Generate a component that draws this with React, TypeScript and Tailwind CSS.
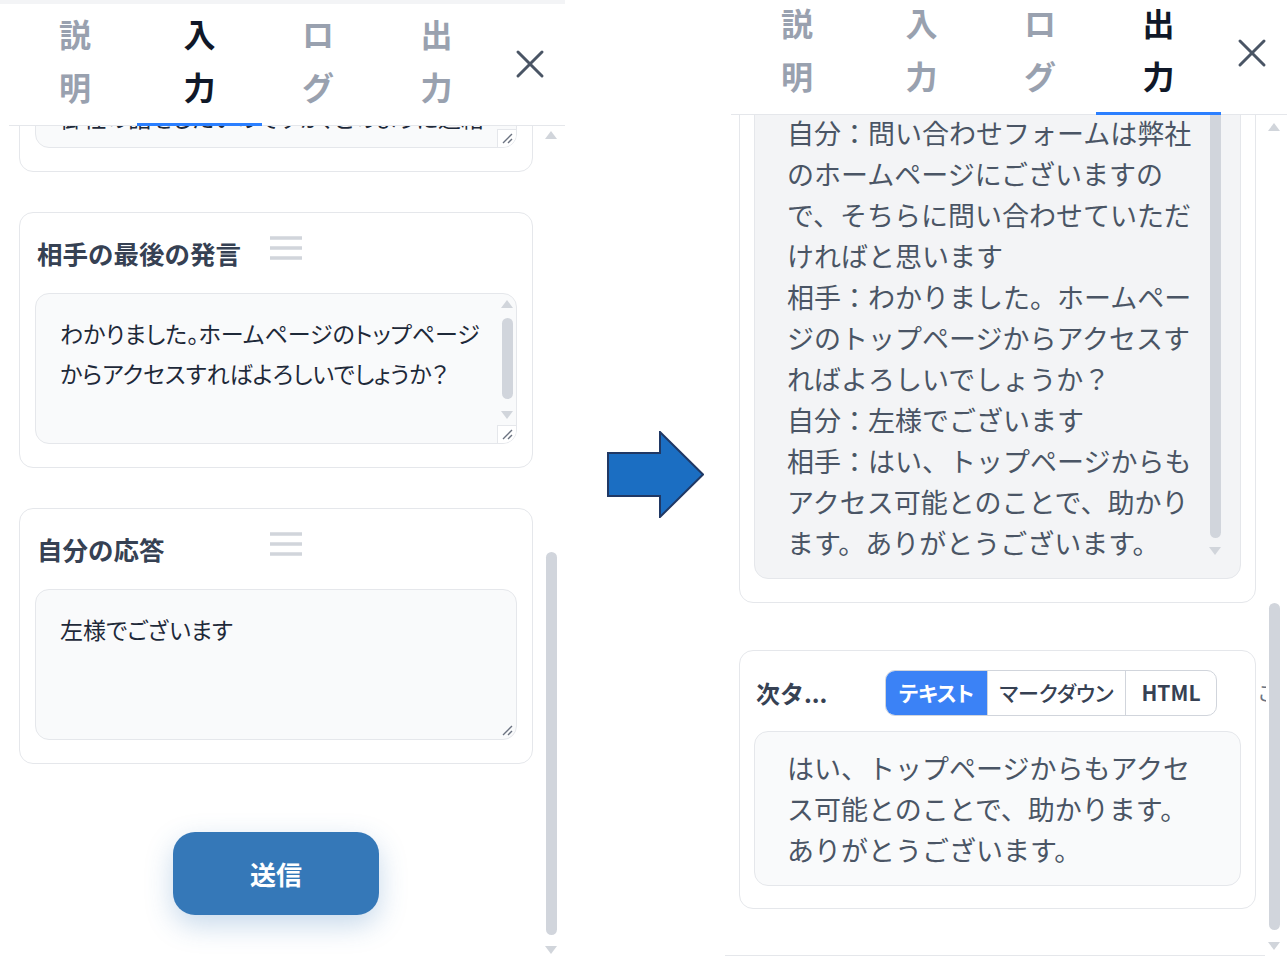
import { X } from 'lucide-react';

const font = "font-['Noto_Sans_CJK_JP','Noto_Sans',sans-serif]";

const TABS = [
  { chars: ['説', '明'], w: 'w-[124px]' },
  { chars: ['入', '力'], w: 'w-[125px]' },
  { chars: ['ロ', 'グ'], w: 'w-[112px]' },
  { chars: ['出', '力'], w: 'w-[125px]' },
];

function TabBar({ active }: { active: number }) {
  return (
    <div className="ml-[9px] flex h-[115px] shrink-0 border-b border-gray-200 pl-[4px]">
      {TABS.map((t, i) => (
        <div
          key={i}
          className={`relative flex h-full ${t.w} flex-col items-center text-[32px] font-bold leading-[53px] ${
            i === active ? 'text-gray-900' : 'text-gray-400'
          }`}
        >
          <div className="-mt-[4px] flex flex-col items-center">
            {t.chars.map((c) => (
              <span key={c}>{c}</span>
            ))}
          </div>
          {i === active && <div className="absolute bottom-[-1px] left-0 right-0 h-[3px] bg-blue-500" />}
        </div>
      ))}
      <div className="ml-[7px] mt-[29px] text-gray-600">
        <X size={48} strokeWidth={1.5} />
      </div>
    </div>
  );
}

function Tri({ down }: { down?: boolean }) {
  return (
    <svg width="12" height="8" viewBox="0 0 12 8" className="block">
      <polygon points={down ? '0,0 12,0 6,8' : '6,0 12,8 0,8'} fill="#d1d5db" />
    </svg>
  );
}

function Scrollbar({ top, thumb, gap }: { top: string; thumb: string; gap: string }) {
  return (
    <div className="flex w-[12px] shrink-0 flex-col items-center">
      <div className={top}>
        <Tri />
      </div>
      <div className={`w-[11px] rounded-full bg-gray-300 ${thumb}`} />
      <div className={gap}>
        <Tri down />
      </div>
    </div>
  );
}

function Handle() {
  return (
    <svg width="32" height="24" viewBox="0 0 32 24" className="absolute left-[250px] top-[23px]">
      <path d="M0 2h32M0 12h32M0 22h32" stroke="#d1d5db" strokeWidth="3.5" />
    </svg>
  );
}

function Grip() {
  return (
    <svg width="12" height="12" viewBox="0 0 12 12" className="block">
      <path d="M2 11 11 2M7 11 11 7" stroke="#6b7280" strokeWidth="1.4" />
    </svg>
  );
}

function Corner() {
  return (
    <div className="absolute bottom-0 right-0 flex h-[18px] w-[19px] items-center justify-center border-l border-t border-gray-200 bg-white">
      <Grip />
    </div>
  );
}

function InputCard({
  title,
  lines,
  className = '',
  scroll,
  corner,
}: {
  title: string;
  lines: string[];
  className?: string;
  scroll?: boolean;
  corner?: boolean;
}) {
  return (
    <div className={`relative shrink-0 rounded-[14px] border border-gray-200 bg-white px-[15px] pb-[23px] ${className}`}>
      <div className="h-[80px] pl-[2px] pt-[24px] text-[25.5px] font-bold leading-[32px] text-gray-700">{title}</div>
      <Handle />
      <div className="relative h-[151px] overflow-hidden rounded-[14px] border border-gray-200 bg-[#f9fafb] pl-[24px] pt-[19px] text-[23px] leading-[40px] text-gray-800 [font-feature-settings:'palt']">
        {lines.map((l) => (
          <div key={l} className="whitespace-nowrap">
            {l}
          </div>
        ))}
        {scroll && (
          <div className="absolute right-[3px] top-[6px] flex flex-col items-center">
            <Tri />
            <div className="mt-[10px] h-[81px] w-[11px] rounded-full bg-gray-300" />
            <div className="mt-[12px]">
              <Tri down />
            </div>
          </div>
        )}
        {corner ? (
          <Corner />
        ) : (
          <div className="absolute bottom-[3px] right-[3px]">
            <Grip />
          </div>
        )}
      </div>
    </div>
  );
}

function LeftPanel() {
  return (
    <div className="flex w-[565px] shrink-0 flex-col">
      <div className="h-[4px] bg-gray-100" />
      <div className="h-[7px]" />
      <TabBar active={1} />
      <div className="flex h-[840px] overflow-hidden">
        <div className="ml-[19px] flex w-[514px] flex-col">
          <InputCard
            className="mt-[-210px]"
            title="相手の発言履歴"
            lines={[
              'お世話になっております。',
              '御社の製品について伺いたいのですが、',
              '御社の話をしたいのですが、どのように連絡',
              'をとればよろしいでしょうか？',
            ]}
            corner
          />
          <InputCard
            className="mt-[40px]"
            title="相手の最後の発言"
            lines={['わかりました。ホームページのトップページ', 'からアクセスすればよろしいでしょうか？']}
            scroll
            corner
          />
          <InputCard className="mt-[40px]" title="自分の応答" lines={['左様でございます']} />
          <button className="mt-[68px] h-[83px] w-[206px] self-center rounded-[22px] bg-[#3578b8] text-[26px] font-bold text-white shadow-[0_10px_28px_rgba(53,120,184,0.28)]">
            送信
          </button>
        </div>
        <div className="ml-[12px]">
          <Scrollbar top="mt-[5px]" thumb="mt-[413px] h-[383px]" gap="mt-[11px]" />
        </div>
      </div>
    </div>
  );
}

const HISTORY = [
  '相手：お世話になっております。',
  '自分：お世話になっております。',
  '相手：問い合わせをしたいのですが',
  '、どのようにすればよいですか？',
  '自分：問い合わせフォームは弊社',
  'のホームページにございますの',
  'で、そちらに問い合わせていただ',
  'ければと思います',
  '相手：わかりました。ホームペー',
  'ジのトップページからアクセスす',
  'ればよろしいでしょうか？',
  '自分：左様でございます',
  '相手：はい、トップページからも',
  'アクセス可能とのことで、助かり',
  'ます。ありがとうございます。',
];

function RightPanel() {
  return (
    <div className="flex w-[565px] shrink-0 flex-col">
      <TabBar active={3} />
      <div className="flex h-[840px] overflow-hidden">
        <div className="ml-[17px] flex w-[517px] flex-col">
          <div className="relative mt-[-117px] shrink-0 rounded-[14px] border border-gray-200 bg-white px-[14px] pb-[23px]">
            <div className="h-[80px] pl-[2px] pt-[24px] text-[25.5px] font-bold leading-[32px] text-gray-700">会話ログ</div>
            <div className="relative flex h-[500px] flex-col justify-end overflow-hidden rounded-[14px] border border-gray-200 bg-[#f3f4f6] pb-[15px] pl-[32px] text-[27px] leading-[41px] text-gray-600">
              {HISTORY.map((l) => (
                <div key={l} className="whitespace-nowrap">
                  {l}
                </div>
              ))}
              <div className="absolute bottom-[23px] right-[19px] flex flex-col items-center">
                <div className="h-[440px] w-[11px] rounded-full bg-gray-300" />
                <div className="mt-[9px]">
                  <Tri down />
                </div>
              </div>
            </div>
          </div>
          <div className="relative mt-[47px] shrink-0 rounded-[14px] border border-gray-200 bg-white px-[14px] pb-[22px]">
            <div className="flex h-[80px] items-center pt-[3px]">
              <div className="w-[131px] pl-[2px] text-[24px] font-bold text-gray-700">次タ...</div>
              <div className="flex h-[46px] overflow-hidden rounded-[10px] border border-gray-300 text-[21px] [font-feature-settings:'palt']">
                <div className="flex w-[101px] items-center justify-center bg-[#3b82f6] font-bold text-white">テキスト</div>
                <div className="flex w-[138px] items-center justify-center border-l border-gray-300 font-medium text-gray-700">
                  マークダウン
                </div>
                <div className="flex w-[91px] items-center justify-center border-l border-gray-300 font-semibold text-gray-700">
                  HTML
                </div>
              </div>
            </div>
            <div className="h-[155px] rounded-[14px] border border-gray-200 bg-[#f9fafb] pl-[32px] pt-[15px] text-[27px] leading-[41px] text-gray-600">
              <div className="whitespace-nowrap">はい、トップページからもアクセ</div>
              <div className="whitespace-nowrap">ス可能とのことで、助かります。</div>
              <div className="whitespace-nowrap">ありがとうございます。</div>
            </div>
            <div className="absolute left-[517px] top-[30px] w-[9px] overflow-hidden text-[20px] leading-[24px] text-gray-500">
              こ
            </div>
          </div>
        </div>
        <div className="ml-[12px]">
          <Scrollbar top="mt-[8px]" thumb="mt-[472px] h-[327px]" gap="mt-[12px]" />
        </div>
      </div>
      <div className="ml-[3px] h-px w-[540px] bg-gray-200" />
    </div>
  );
}

function Arrow() {
  return (
    <div className="flex w-[157px] shrink-0 items-center justify-center pb-[11px] pl-[24px]">
      <svg width="97" height="87" viewBox="0 0 97 87">
        <polygon points="1,22 53,22 53,1 96,43.5 53,86 53,65 1,65" fill="#1b6ec2" stroke="#203864" strokeWidth="2" />
      </svg>
    </div>
  );
}

export default function App() {
  return (
    <div className={`flex h-[960px] w-[1287px] overflow-hidden bg-white ${font}`}>
      <LeftPanel />
      <Arrow />
      <RightPanel />
    </div>
  );
}
